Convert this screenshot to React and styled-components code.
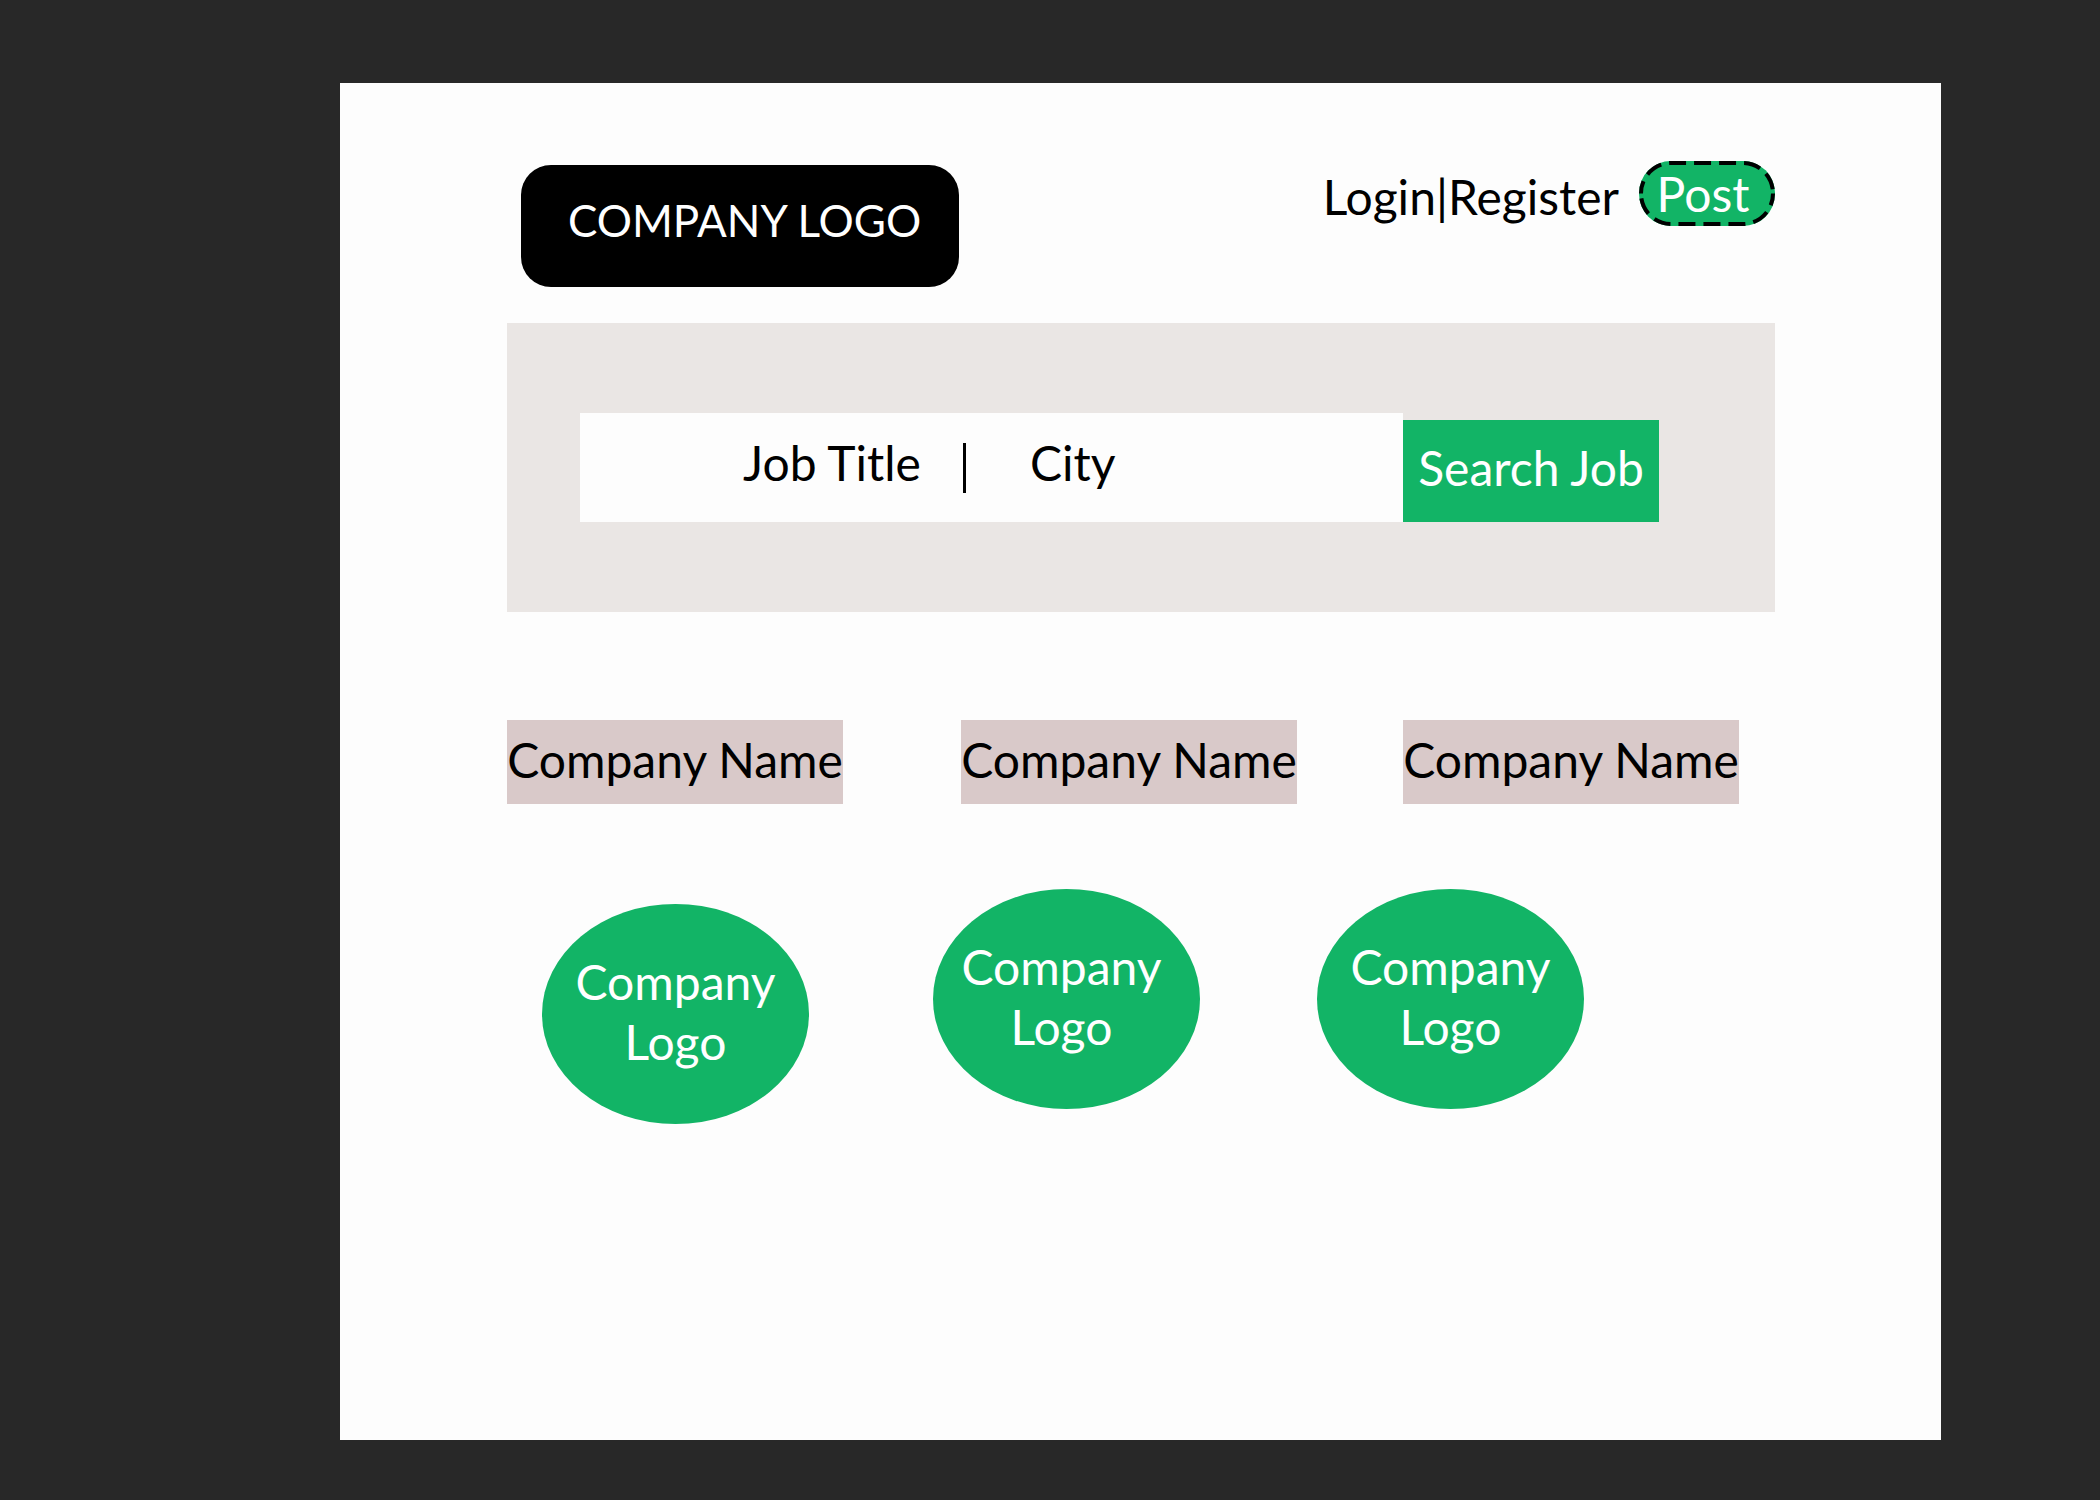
import React from "react";
import styled, { createGlobalStyle } from "styled-components";

const green = "#12b466";

const GlobalStyle = createGlobalStyle`
  *, *::before, *::after { box-sizing: border-box; }
  body {
    margin: 0;
    background: #282828;
    color: #000;
    font-family: Lato, "Open Sans", sans-serif;
    font-size: 48px;
    line-height: 60px;
  }
  button, input { font: inherit; color: inherit; }
`;

const Backdrop = styled.div`
  min-height: 100vh;
  display: flex;
  padding: 83px 159px 60px 340px;
`;

const Page = styled.div`
  flex: 1;
  min-width: 0;
  padding: 78px 166px 78px 167px;
  background: #fdfdfd;
`;

const Header = styled.header`
  display: flex;
  justify-content: space-between;
  align-items: flex-start;
`;

const Brand = styled.a`
  margin: 4px 0 0 14px;
  padding: 25px 38px 37px 47px;
  border-radius: 30px;
  background: #000;
  color: #fff;
  font-size: 44px;
  text-decoration: none;
  white-space: nowrap;
`;

const Account = styled.nav`
  display: flex;
  align-items: flex-start;
  gap: 20px;
`;

const AccountLinks = styled.div`
  display: flex;
  padding-top: 6px;
`;

const AccountLink = styled.a`
  color: inherit;
  text-decoration: none;
`;

const Divider = styled.span`
  width: 3px;
  height: 50px;
  background: #000;
`;

const PostButton = styled.button`
  position: relative;
  width: 136px;
  height: 65px;
  padding: 0 8px 0 0;
  border: 0;
  border-radius: 32px;
  background: ${green};
  color: #fff;
  line-height: 64px;
`;

const DashedOutline = styled.svg`
  position: absolute;
  inset: 0;
  width: 100%;
  height: 100%;
  fill: none;
  stroke: #000;
  stroke-width: 4;
  stroke-dasharray: 17 8;
`;

const SearchPanel = styled.form`
  display: flex;
  align-items: flex-end;
  margin-top: 36px;
  padding: 90px 116px 90px 73px;
  background: #eae6e4;
`;

const Fields = styled.div`
  flex: 1;
  min-width: 0;
  display: flex;
  align-items: flex-start;
  height: 109px;
  padding: 20px 40px 0 163px;
  background: #fdfdfd;
`;

const Field = styled.input`
  width: ${(p) => p.$width};
  min-width: 0;
  height: 60px;
  padding: 0;
  border: 0;
  outline: 0;
  background: transparent;
  &::placeholder { color: #000; opacity: 1; }
`;

const FieldDivider = styled(Divider)`
  margin: 10px 64px 0 0;
`;

const SearchButton = styled.button`
  width: 256px;
  height: 102px;
  padding: 0 0 6px;
  border: 0;
  background: ${green};
  color: #fff;
  white-space: nowrap;
`;

const Names = styled.div`
  display: grid;
  grid-template-columns: 454fr 442fr 372fr;
  margin-top: 108px;
`;

const Name = styled.h2`
  width: 336px;
  margin: 0;
  padding: 10px 0 14px;
  background: #d9c9c9;
  font-size: inherit;
  font-weight: 400;
  text-align: center;
  white-space: nowrap;
`;

const Logos = styled.div`
  display: grid;
  grid-template-columns: 391fr 384fr 458fr;
  margin-top: 85px;
  padding-left: 35px;
`;

const Logo = styled.div`
  display: flex;
  align-items: center;
  justify-content: center;
  width: 267px;
  height: 220px;
  margin-top: ${(p) => (p.$lowered ? "15px" : "0")};
  padding: 0 ${(p) => (p.$inset ? "10px" : "0")} 4px 0;
  border-radius: 50%;
  background: ${green};
  color: #fff;
  text-align: center;
`;

export default function App() {
  return (
    <>
      <GlobalStyle />
      <Backdrop>
        <Page>
          <Header>
            <Brand href="#">COMPANY LOGO</Brand>
            <Account>
              <AccountLinks>
                <AccountLink href="#login">Login</AccountLink>
                <span aria-hidden="true">|</span>
                <AccountLink href="#register">Register</AccountLink>
              </AccountLinks>
              <PostButton type="button">
                <DashedOutline viewBox="0 0 136 65" aria-hidden="true">
                  <path d="M2 32.5A30 30.5 0 0 1 32 2H104A30 30.5 0 0 1 134 32.5" strokeDashoffset="4.5" />
                  <path d="M134 32.5A30 30.5 0 0 1 104 63H32A30 30.5 0 0 1 2 32.5" strokeDashoffset="5" />
                </DashedOutline>
                Post
              </PostButton>
            </Account>
          </Header>
          <SearchPanel onSubmit={(e) => e.preventDefault()}>
            <Fields>
              <Field $width="220px" aria-label="Job Title" placeholder="Job Title" />
              <FieldDivider />
              <Field $width="300px" aria-label="City" placeholder="City" />
            </Fields>
            <SearchButton type="submit">Search Job</SearchButton>
          </SearchPanel>
          <Names>
            <Name>Company Name</Name>
            <Name>Company Name</Name>
            <Name>Company Name</Name>
          </Names>
          <Logos>
            <Logo $lowered>Company<br />Logo</Logo>
            <Logo $inset>Company<br />Logo</Logo>
            <Logo>Company<br />Logo</Logo>
          </Logos>
        </Page>
      </Backdrop>
    </>
  );
}
